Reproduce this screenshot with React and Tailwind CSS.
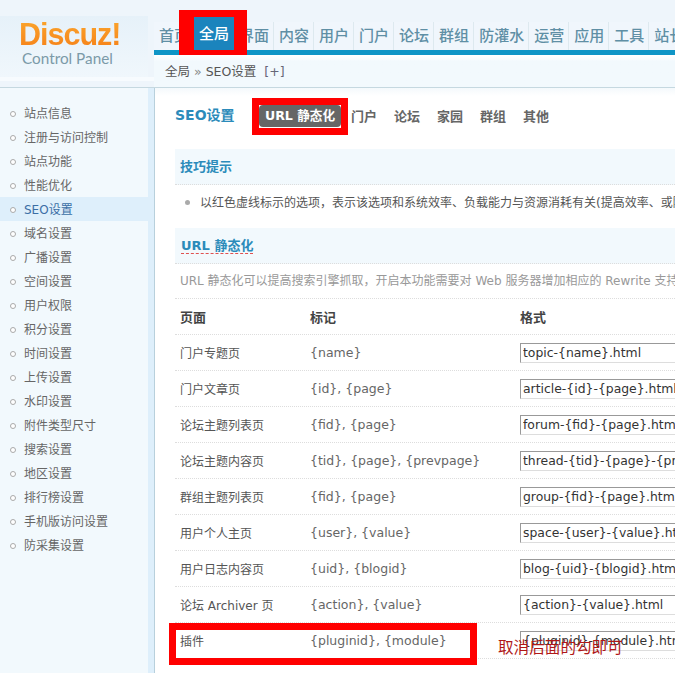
import React from "react";

const font = "font-['DejaVu_Sans','Noto_Sans_CJK_SC',sans-serif]";

const navItems = ["首页", "全局", "界面", "内容", "用户", "门户", "论坛", "群组", "防灌水", "运营", "应用", "工具", "站长"];

const menu = [
  "站点信息", "注册与访问控制", "站点功能", "性能优化", "SEO设置", "域名设置", "广播设置", "空间设置", "用户权限",
  "积分设置", "时间设置", "上传设置", "水印设置", "附件类型尺寸", "搜索设置", "地区设置", "排行榜设置", "手机版访问设置", "防采集设置",
];

const rows = [
  ["门户专题页", "{name}", "topic-{name}.html"],
  ["门户文章页", "{id}, {page}", "article-{id}-{page}.html"],
  ["论坛主题列表页", "{fid}, {page}", "forum-{fid}-{page}.html"],
  ["论坛主题内容页", "{tid}, {page}, {prevpage}", "thread-{tid}-{page}-{prevpage}.html"],
  ["群组主题列表页", "{fid}, {page}", "group-{fid}-{page}.html"],
  ["用户个人主页", "{user}, {value}", "space-{user}-{value}.html"],
  ["用户日志内容页", "{uid}, {blogid}", "blog-{uid}-{blogid}.html"],
  ["论坛 Archiver 页", "{action}, {value}", "{action}-{value}.html"],
  ["插件", "{pluginid}, {module}", "{pluginid}-{module}.html"],
];

const Row = ({ page, mark, format }) => (
  <div className="flex h-9 items-center border-b border-dotted border-[#ddd] pl-[5px] text-[#555]">
    <div className="w-[130px] shrink-0 pt-0.5 text-xs whitespace-nowrap">{page}</div>
    <div className="w-[210px] shrink-0 pt-0.5 text-[12.5px] text-[#666]">{mark}</div>
    <input
      readOnly
      value={format}
      className="h-5 w-[250px] shrink-0 border border-[#999] border-r-[#ddd] border-b-[#ddd] bg-white px-0.5 text-[12.4px] text-[#333] outline-none"
    />
  </div>
);

const App = () => {
  return (
    <div className={`relative h-[673px] w-[675px] overflow-hidden bg-white ${font}`}>
      {/* header */}
      <div className="flex h-[88px] border-b border-[#c5d8e0] bg-[#eef5fb]">
        <div className="w-[154px] shrink-0">
          <div className="mt-[22px] h-[61px] w-[148px] bg-gradient-to-b from-[#e6f1f9] to-[#f0f7fc] pl-[19px]">
            <div className="-mt-[6px] w-fit bg-gradient-to-b from-[#fba92e] to-[#f57f17] bg-clip-text pt-[1px] text-[30.5px] leading-[34px] font-bold tracking-[-1px] text-transparent font-['Liberation_Sans',sans-serif]">
              Discuz!
            </div>
            <div className="-mt-[3px] pl-[3px] text-[15.3px] leading-5 text-[#7b9aa8] font-['Lato',sans-serif]">Control Panel</div>
          </div>
          <div className="h-1 bg-[#f7fbfe]" />
        </div>
        <div className="min-w-0 flex-1">
          <div className="flex h-[50px] items-end overflow-hidden">
            {navItems.map((item) => (
              <div
                key={item}
                className={
                  item === "全局"
                    ? "flex h-[33px] shrink-0 items-center bg-[#1b84bd] px-[5px] pt-0.5 text-[15px] font-medium whitespace-nowrap text-white"
                    : "flex h-7 shrink-0 items-center border-r border-[#dde9ef] bg-[#f0f6fc] pr-1 pl-[5px] text-[15px] font-medium whitespace-nowrap text-[#5f8fa5]"
                }
              >
                {item}
              </div>
            ))}
          </div>
          <div className="h-[5px] bg-[#0f95c6]" />
          <div className="flex h-[32px] items-center bg-gradient-to-b from-white to-[#f2f9fd] to-[20%] pt-[3px] pl-[11px] text-[12.5px] whitespace-nowrap text-[#555]">
            全局 <span className="mx-1 text-[#888]">»</span> SEO设置
            <span className="ml-2 text-[#667]">[+]</span>
          </div>
        </div>
      </div>

      <div className="flex h-[585px]">
        {/* sidebar */}
        <div className="w-[155px] shrink-0 border-r border-[#b8d0dc] bg-[#deeffb]">
          <div className="h-full w-[148px] bg-[#f2f9fd] pt-[13px]">
            {menu.map((item) => (
              <div
                key={item}
                className={`flex h-6 items-center pt-px pl-[10px] text-xs ${
                  item === "SEO设置" ? "bg-[#deeffb] text-[#3a6ea5]" : "text-[#666]"
                }`}
              >
                <span className="mr-[8px] h-[6px] w-[6px] rounded-full border border-[#aaa] bg-white" />
                {item}
              </div>
            ))}
          </div>
        </div>

        {/* main */}
        <div className="min-w-0 flex-1 overflow-hidden bg-gradient-to-b from-[#f4f9fc] to-white to-[8px] pl-5">
          <div className="flex h-[61px] items-start pt-[17px]">
            <div className="w-[84px] text-[14px] leading-5 font-bold whitespace-nowrap text-[#2b8bba]">SEO设置</div>
            <div className="flex h-[22px] w-[82px] items-center justify-center rounded-sm bg-[#666] pt-px text-[12.6px] font-bold whitespace-nowrap text-white">URL 静态化</div>
            <div className="flex h-[22px] items-center gap-[17px] pt-px pl-[10px] text-[13px] font-bold whitespace-nowrap text-[#666]">
              <span>门户</span>
              <span>论坛</span>
              <span>家园</span>
              <span>群组</span>
              <span>其他</span>
            </div>
          </div>

          <div className="w-[520px]">
            <div className="flex h-9 items-center border-b border-dotted border-[#ddd] bg-[#f2f9fd] pl-[5px] text-[13px] font-bold text-[#2b8bba]">技巧提示</div>
            <div className="flex h-[43px] items-center overflow-hidden pb-2 pl-[10px] text-xs whitespace-nowrap text-[#555]">
              <span className="mr-[10px] h-[5px] w-[5px] shrink-0 rounded-full bg-[#aaa]" />
              以红色虚线标示的选项，表示该选项和系统效率、负载能力与资源消耗有关(提高效率、或降低效率)
            </div>
            <div className="flex h-9 items-center border-b border-dotted border-[#ddd] bg-[#f2f9fd] pl-[6px] text-[13px] font-bold text-[#2b8bba]">
              <span className="border-b border-dashed border-[#e05050] leading-[15px]">URL 静态化</span>
            </div>
            <div className="flex h-[35px] items-center overflow-hidden border-b border-dotted border-[#ddd] pl-[5px] text-xs whitespace-nowrap text-[#999]">
              URL 静态化可以提高搜索引擎抓取，开启本功能需要对 Web 服务器增加相应的 Rewrite 支持
            </div>
            <div className="flex h-9 items-center border-b border-dotted border-[#ddd] pt-0.5 pl-[5px] text-[13px] font-bold text-[#444]">
              <div className="w-[130px]">页面</div>
              <div className="w-[210px]">标记</div>
              <div>格式</div>
            </div>
            {rows.map((row) => (
              <Row key={row[0]} page={row[0]} mark={row[1]} format={row[2]} />
            ))}
          </div>
        </div>
      </div>

      {/* red annotations over the screenshot */}
      <div className="absolute top-[10px] left-[179px] h-[45px] w-[68px] border-t-[7px] border-r-[13px] border-b-[5px] border-l-[15px] border-[#f00]" />
      <div className="absolute top-[98px] left-[252px] h-[37px] w-[96px] border-7 border-[#f00]" />
      <div className="absolute top-[623px] left-[169px] h-[42px] w-[308px] border-7 border-[#f00]" />
      <div className="absolute top-[638px] left-[498px] text-[15.6px] leading-5 whitespace-nowrap text-[#b01818]">取消后面的勾即可</div>
    </div>
  );
};

export default App;
